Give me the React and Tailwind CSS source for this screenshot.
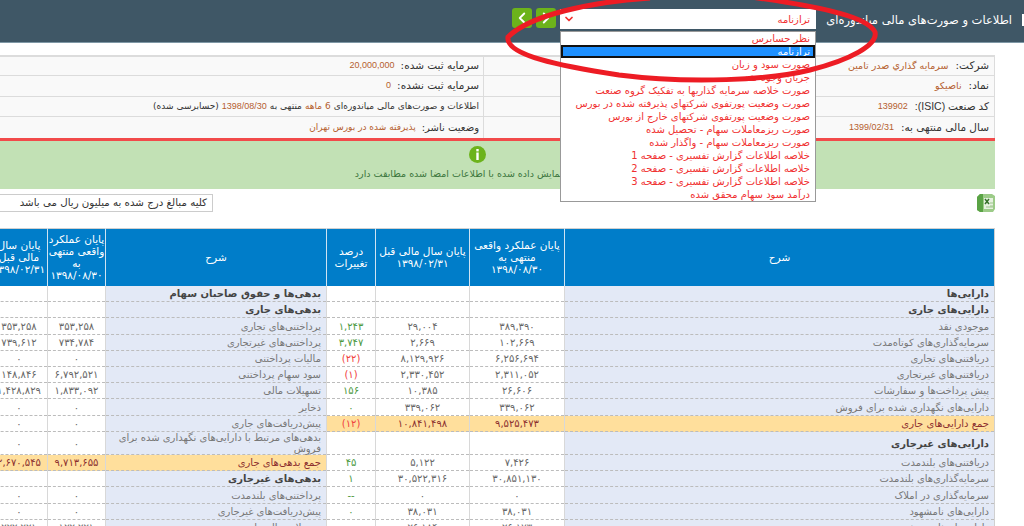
import React from "react";
import { ChevronDown, ChevronLeft, ChevronRight } from "lucide-react";

const reportItems = [
   "نظر حسابرس",
   "ترازنامه",
   "صورت سود و زیان",
   "جریان وجوه نقد",
   "صورت خلاصه سرمایه گذاریها به تفکیک گروه صنعت",
   "صورت وضعیت پورتفوی شرکتهای پذیرفته شده در بورس",
   "صورت وضعیت پورتفوی شرکتهای خارج از بورس",
   "صورت ریزمعاملات سهام - تحصیل شده",
   "صورت ریزمعاملات سهام - واگذار شده",
   "خلاصه اطلاعات گزارش تفسیری - صفحه 1",
   "خلاصه اطلاعات گزارش تفسیری - صفحه 2",
   "خلاصه اطلاعات گزارش تفسیری - صفحه 3",
   "درآمد سود سهام محقق شده",
];

// type: b = section title, t = total row, empty = plain row
const rows = [
   { h: "h-[16px]", r: { name: "دارایی‌ها", type: "b" }, l: { name: "بدهی‌ها و حقوق صاحبان سهام", type: "b" } },
   { h: "h-[16px]", r: { name: "دارایی‌های جاری", type: "b" }, l: { name: "بدهی‌های جاری", type: "b" } },
   { h: "h-[17px]", r: { name: "موجودی نقد", a: "۳۸۹,۳۹۰", b: "۲۹,۰۰۴", pct: "۱,۲۴۳" }, l: { name: "پرداختنی‌های تجاری", a: "۳۵۳,۲۵۸", b: "۳۵۳,۲۵۸" } },
   { h: "h-[16px]", r: { name: "سرمایه‌گذاری‌های کوتاه‌مدت", a: "۱۰۲,۶۶۹", b: "۲,۶۶۹", pct: "۳,۷۴۷" }, l: { name: "پرداختنی‌های غیرتجاری", a: "۷۳۴,۷۸۴", b: "۷۳۹,۶۱۲" } },
   { h: "h-[16px]", r: { name: "دریافتنی‌های تجاری", a: "۶,۲۵۶,۶۹۴", b: "۸,۱۲۹,۹۲۶", pct: "(۲۲)" }, l: { name: "مالیات پرداختنی", a: "۰", b: "۰" } },
   { h: "h-[16px]", r: { name: "دریافتنی‌های غیرتجاری", a: "۲,۳۱۱,۰۵۲", b: "۲,۳۳۰,۴۵۲", pct: "(۱)" }, l: { name: "سود سهام پرداختنی", a: "۶,۷۹۲,۵۲۱", b: "۱۴۸,۸۴۶" } },
   { h: "h-[16px]", r: { name: "پیش پرداخت‌ها و سفارشات", a: "۲۶,۶۰۶", b: "۱۰,۳۸۵", pct: "۱۵۶" }, l: { name: "تسهیلات مالی", a: "۱,۸۳۳,۰۹۲", b: "۱,۴۲۸,۸۲۹" } },
   { h: "h-[17px]", r: { name: "دارایی‌های نگهداری شده برای فروش", a: "۳۳۹,۰۶۲", b: "۳۳۹,۰۶۲", pct: "۰" }, l: { name: "ذخایر", a: "۰", b: "۰" } },
   { h: "h-[16px]", r: { name: "جمع دارایی‌های جاری", a: "۹,۵۲۵,۴۷۳", b: "۱۰,۸۴۱,۴۹۸", pct: "(۱۲)", type: "t" }, l: { name: "پیش‌دریافت‌های جاری", a: "۰", b: "۰" } },
   { h: "h-[23px]", r: { name: "دارایی‌های غیرجاری", type: "b" }, l: { name: "بدهی‌های مرتبط با دارایی‌های نگهداری شده برای فروش", a: "۰", b: "۰" } },
   { h: "h-[16px]", r: { name: "دریافتنی‌های بلندمدت", a: "۷,۴۲۶", b: "۵,۱۲۲", pct: "۴۵" }, l: { name: "جمع بدهی‌های جاری", a: "۹,۷۱۳,۶۵۵", b: "۲,۶۷۰,۵۴۵", type: "t" } },
   { h: "h-[16px]", r: { name: "سرمایه‌گذاری‌های بلندمدت", a: "۳۰,۸۵۱,۱۳۰", b: "۳۰,۵۲۲,۳۱۶", pct: "۱" }, l: { name: "بدهی‌های غیرجاری", type: "b" } },
   { h: "h-[17px]", r: { name: "سرمایه‌گذاری در املاک", a: "۰", b: "۰", pct: "--" }, l: { name: "پرداختنی‌های بلندمدت", a: "۰", b: "۰" } },
   { h: "h-[16px]", r: { name: "دارایی‌های نامشهود", a: "۳۸,۰۳۱", b: "۳۸,۰۳۱", pct: "۰" }, l: { name: "پیش‌دریافت‌های غیرجاری", a: "۰", b: "۰" } },
   { h: "h-[16px]", r: { name: "دارایی‌های ثابت مشهود", a: "۲۶,۱۷۳", b: "۲۶,۱۸۴", pct: "۰" }, l: { name: "تسهیلات مالی بلندمدت", a: "۱۲۲,۲۲۱", b: "۲۲۲,۲۲۱" } },
];

const headers = [
   ["شرح"],
   ["پایان عملکرد واقعی", "منتهی به", "۱۳۹۸/۰۸/۳۰"],
   ["پایان سال مالی قبل", "۱۳۹۸/۰۲/۳۱"],
   ["درصد", "تغییرات"],
   ["شرح"],
   ["پایان عملکرد", "واقعی منتهی", "به", "۱۳۹۸/۰۸/۳۰"],
   ["پایان سال", "مالی قبل", "۱۳۹۸/۰۲/۳۱"],
];

const cellBase = "border-b border-dashed border-b-[#bcbcbc] border-l border-l-[#d8d8d8] [border-left-style:solid] align-middle p-0 leading-[11px]";

function NameCell({ row }) {
   const color = row.type === "t"
      ? "bg-[#ffdf9c] text-[#8c2f2f]"
      : row.type === "b"
         ? "bg-[#e3e9f6] text-[#444] font-bold"
         : "bg-[#e3e9f6] text-[#777]";
   return <td className={`${cellBase} ${color} px-[5px] text-right`}>{row.name}</td>;
}

function NumCell({ value, total }) {
   return (
      <td className={`${cellBase} text-center whitespace-nowrap ${total ? "bg-[#ffdf9c] text-[#8c2f2f]" : "bg-white text-[#666]"}`}>
         {value}
      </td>
   );
}

function PctCell({ value, total }) {
   const isNegative = value && value.startsWith("(");
   return (
      <td className={`${cellBase} text-center ${total ? "bg-[#ffdf9c]" : "bg-white"} ${isNegative ? "text-[#f04040]" : "text-[#4d9a3f]"}`}>
         {value}
      </td>
   );
}

function ExcelIcon() {
   return (
      <svg width="18" height="18" viewBox="0 0 18 18">
         <path d="M3 0h12l3 2v13l-2 3H3l-3-2V3z" fill="#9ccb88" />
         <path d="M0 3l3-3h3v18H3l-3-2z" fill="#5aa345" />
         <rect x="7" y="4" width="9" height="11" fill="#e6f1df" />
         <path d="M8 5l4 5M12 5l-4 5" stroke="#35702a" strokeWidth="1.5" />
         <path d="M13 9h3M13 12h3M9 13h7" stroke="#9cc48c" strokeWidth="1" />
      </svg>
   );
}

function InfoValue({ children }) {
   return <span className="text-[#b5602f] text-[9.5px]">{children}</span>;
}

function LatinValue({ children }) {
   return <span className="text-[#b5602f] text-[9px] font-['Liberation_Sans',sans-serif]">{children}</span>;
}

function App() {
   return (
      <div dir="rtl" className="relative w-[1024px] h-[526px] overflow-hidden bg-white font-['DejaVu_Sans',sans-serif] text-[10px]">
         {/* Top bar */}
         <div className="flex items-start h-[43px] bg-[#3f5766] border-b border-[#7f98a6]">
            <div className="w-[2px] h-[12px] mt-[14px] bg-white"></div>
            <div className="w-[206px] pr-[10px] h-[42px] flex items-center text-[11.5px] text-white whitespace-nowrap">اطلاعات و صورت‌های مالی میاندوره‌ای</div>
            <div className="relative w-[256px] h-[20px] mt-[9px] bg-white flex items-center justify-between pr-[6px] pl-[3px] text-[10px] text-[#f03030]">
               <span>ترازنامه</span>
               <ChevronDown className="w-[12px] h-[12px]" strokeWidth={3.5} />
               <div className="absolute top-[22px] right-0 w-[256px] z-10 bg-white border border-[#999] text-[10px] leading-[13px]">
                  {reportItems.map((item, index) => (
                     <div
                        key={index}
                        className={`h-[13px] pr-[5px] whitespace-nowrap ${index === 1 ? "bg-[#1e90ff] text-white outline-2 -outline-offset-2 outline-[#111]" : "text-[#f03030]"}`}
                     >
                        {item}
                     </div>
                  ))}
               </div>
            </div>
            <div className="flex gap-[4px] mr-[4px] mt-[8px]">
               <div className="w-[20px] h-[20px] rounded-[3px] bg-[#6cb31b] flex items-center justify-center">
                  <ChevronRight className="w-[18px] h-[18px] text-white" strokeWidth={2.5} />
               </div>
               <div className="w-[20px] h-[20px] rounded-[3px] bg-[#6cb31b] flex items-center justify-center">
                  <ChevronLeft className="w-[18px] h-[18px] text-white" strokeWidth={2.5} />
               </div>
            </div>
         </div>

         <div className="w-[1036px] mr-[29px] mt-[12px]">
            {/* Company info */}
            <div className="bg-[#f9f9f9] border-t-2 border-r border-[#dcdcdc] text-[#333] text-[10.5px]">
               <div className="grid grid-cols-[511px_1fr] h-[19px] items-center border-b border-[#dcdcdc]">
                  <div className="pr-[5px] border-l border-[#dcdcdc] h-full flex items-center gap-[7px]">
                     <span>شرکت:</span><InfoValue>سرمایه گذاري صدر تامین</InfoValue>
                  </div>
                  <div className="pr-[4px] h-full flex items-center gap-[6px]">
                     <span>سرمایه ثبت شده:</span><LatinValue>20,000,000</LatinValue>
                  </div>
               </div>
               <div className="grid grid-cols-[511px_1fr] h-[21px] items-center border-b border-[#dcdcdc]">
                  <div className="pr-[5px] border-l border-[#dcdcdc] h-full flex items-center gap-[7px]">
                     <span>نماد:</span><InfoValue>ناصیکو</InfoValue>
                  </div>
                  <div className="pr-[4px] h-full flex items-center gap-[6px]">
                     <span>سرمایه ثبت نشده:</span><LatinValue>0</LatinValue>
                  </div>
               </div>
               <div className="grid grid-cols-[511px_1fr] h-[20px] items-center border-b border-[#dcdcdc]">
                  <div className="pr-[5px] border-l border-[#dcdcdc] h-full flex items-center gap-[7px] font-['Liberation_Sans','DejaVu_Sans',sans-serif]">
                     <span>کد صنعت (ISIC):</span><LatinValue>139902</LatinValue>
                  </div>
                  <div className="pr-[4px] h-full flex items-center gap-[3px] text-[9px] whitespace-nowrap">
                     <span>اطلاعات و صورت‌های مالی میاندوره‌ای</span>
                     <span className="text-[#b5602f]">6 ماهه</span>
                     <span>منتهی به</span>
                     <LatinValue>1398/08/30</LatinValue>
                     <span>(حسابرسی شده)</span>
                  </div>
               </div>
               <div className="grid grid-cols-[511px_1fr] h-[21px] items-center">
                  <div className="pr-[5px] border-l border-[#dcdcdc] h-full flex items-center gap-[7px]">
                     <span>سال مالی منتهی به:</span><LatinValue>1399/02/31</LatinValue>
                  </div>
                  <div className="pr-[4px] h-full flex items-center gap-[6px]">
                     <span className="text-[10px]">وضعیت ناشر:</span><span className="text-[#b5602f] text-[9px]">پذیرفته شده در بورس تهران</span>
                  </div>
               </div>
            </div>

            {/* Signed data notice */}
            <div className="h-[51px] bg-[#c2e1b5] border-t-[3px] border-[#f24a4a] flex flex-col items-center pt-[5px] gap-[4px]">
               <svg width="17" height="17" viewBox="0 0 17 17">
                  <circle cx="8.5" cy="8.5" r="8.5" fill="#6cb31b" />
                  <rect x="7.3" y="3" width="2.4" height="2.4" fill="#fff" />
                  <rect x="7.3" y="6.5" width="2.4" height="7.5" fill="#fff" />
               </svg>
               <div className="text-[9.5px] text-[#3c763d] whitespace-nowrap">اطلاعات نمایش داده شده با اطلاعات امضا شده مطابقت دارد</div>
            </div>

            {/* Unit note and excel export */}
            <div className="flex justify-between items-center h-[18px] mt-[5px]">
               <ExcelIcon />
               <div className="w-[254px] h-[18px] bg-white border border-[#ccc] pr-[5px] flex items-center text-[10.25px] text-[#333] whitespace-nowrap">
                  کلیه مبالغ درج شده به میلیون ریال می باشد
               </div>
            </div>

            {/* Balance sheet */}
            <table className="mt-[16px] w-[1004px] table-fixed border-collapse border-t border-r border-[#d0d0d0]">
               <colgroup>
                  <col className="w-[430px]" />
                  <col className="w-[95px]" />
                  <col className="w-[94px]" />
                  <col className="w-[49px]" />
                  <col className="w-[221px]" />
                  <col className="w-[58px]" />
                  <col className="w-[57px]" />
               </colgroup>
               <thead>
                  <tr className="h-[57px]">
                     {headers.map((lines, index) => (
                        <th key={index} className="bg-[#007dc9] text-white font-normal text-[10.5px] leading-[12px] border-l border-[#cfe3f2] text-center align-middle whitespace-nowrap overflow-hidden">
                           {lines.map((line, i) => (
                              <div key={i}>{line}</div>
                           ))}
                        </th>
                     ))}
                  </tr>
               </thead>
               <tbody>
                  {rows.map((row, index) => (
                     <tr key={index} className={row.h}>
                        <NameCell row={row.r} />
                        <NumCell value={row.r.a} total={row.r.type === "t"} />
                        <NumCell value={row.r.b} total={row.r.type === "t"} />
                        <PctCell value={row.r.pct} total={row.r.type === "t"} />
                        <NameCell row={row.l} />
                        <NumCell value={row.l.a} total={row.l.type === "t"} />
                        <NumCell value={row.l.b} total={row.l.type === "t"} />
                     </tr>
                  ))}
               </tbody>
            </table>
         </div>

         {/* Hand drawn red circle over the dropdown */}
         <svg className="absolute top-0 left-0 z-20 pointer-events-none" width="1024" height="100" viewBox="0 0 1024 100">
            <path
               d="M650 -2C590 2 530 15 508 37C505 55 560 66 619 75C690 84 770 80 810 70C850 60 878 45 875 32C868 18 830 8 751 -3"
               fill="none"
               stroke="#ed1c24"
               strokeWidth="5"
            />
         </svg>
      </div>
   );
}

export default App;
